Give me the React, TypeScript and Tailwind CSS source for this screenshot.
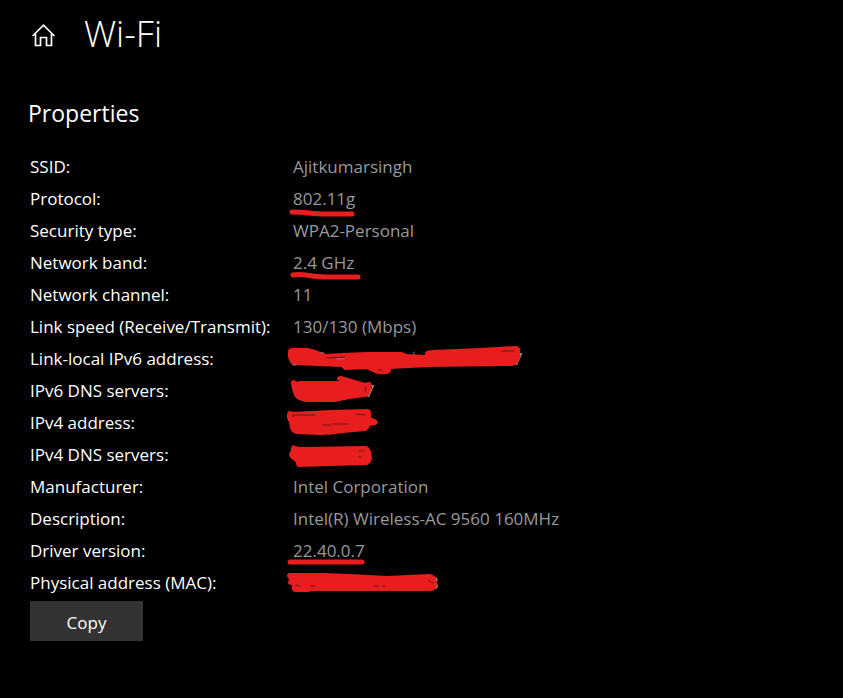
import type { ReactNode } from 'react';

type Property = {
  label: string;
  value?: string;
  // last visible character of a value that is scribbled over
  tail?: ReactNode;
  underline?: string;
  scribble?: string;
  gaps?: string;
  specks?: string;
};

const properties: Property[] = [
  { label: 'SSID:', value: 'Ajitkumarsingh' },
  { label: 'Protocol:', value: '802.11g', underline: 'M7 29C20 29 28 31 40 31H67' },
  { label: 'Security type:', value: 'WPA2-Personal' },
  { label: 'Network band:', value: '2.4 GHz', underline: 'M8 28C18 26 26 30 40 30H73' },
  { label: 'Network channel:', value: '11' },
  { label: 'Link speed (Receive/Transmit):', value: '130/130 (Mbps)' },
  {
    label: 'Link-local IPv6 address:',
    tail: <span className="ml-[220px]">7</span>,
    scribble:
      'M4 9Q4 6 8 6H22Q29 7 40 12L58 11L83 10H116L122 12L141 13V10Q142 8 147 8L195 6L230 4Q234 4 234 7V14L232 19Q230 22 226 22L142 23L105 25Q106 30 101 30Q94 31 88 28L82 25L60 26L57 23L8 21L6 19L4 14Z',
    gaps: 'M42 15L60 14M217 8H229M93 27L97 27',
    specks: 'M52 16H59M129 9V11M36 10H39M8 22H11',
  },
  {
    label: 'IPv6 DNS servers:',
    tail: <span className="ml-[72px]">7</span>,
    scribble:
      'M7 8Q7 6 9 6L11 8L15 7H55L58 6L53 4Q53 2 56 2L80 9L84 8Q86 8 86 11L84 17Q83 21 80 21L72 22Q62 23 50 26H21Q11 24 10 20L8 14Z',
    gaps: 'M81 12L80 17',
  },
  {
    label: 'IPv4 address:',
    scribble:
      'M3 8Q3 5 5 5L8 6L45 4L82 3Q85 3 85 6V11L91 14Q93 16 90 17L84 18Q83 22 80 23L58 25Q46 27 35 27L12 26Q7 25 6 21L5 15L3 11Z',
    gaps: 'M8 10V8H30M71 7L80 8M38 18H46M48 17H62',
  },
  {
    label: 'IPv4 DNS servers:',
    scribble:
      'M7 9Q8 6 10 8L15 9L81 8Q84 9 85 13L86 19Q85 25 80 25L45 26L14 27Q12 27 12 23L6 18Q4 15 7 12Z',
    gaps: 'M74 12H79M74 18H76',
  },
  { label: 'Manufacturer:', value: 'Intel Corporation' },
  { label: 'Description:', value: 'Intel(R) Wireless-AC 9560 160MHz' },
  { label: 'Driver version:', value: '22.40.0.7', underline: 'M5 27H77' },
  {
    label: 'Physical address (MAC):',
    tail: <span className="ml-[136px]">8</span>,
    scribble:
      'M3 9Q3 7 5 7H38Q70 8 102 10L143 8Q149 8 150 12L151 16Q151 23 145 23H27L23 24H11Q8 24 8 22V18L4 16L5 12Z',
    gaps: 'M11 18L15 19M25 19H30M89 19H94M97 19H100M144 14L148 16',
  },
];

function PenMarks({ underline, scribble, gaps, specks }: Property) {
  if (!underline && !scribble) return null;

  return (
    <svg
      className="absolute top-0 -left-2 h-8 w-60 overflow-visible"
      viewBox="0 0 240 32"
      fill="none"
      strokeLinecap="round"
      strokeLinejoin="round"
      aria-hidden="true"
    >
      {underline && <path d={underline} stroke="#e81e1e" strokeWidth="5" />}
      {scribble && <path d={scribble} fill="#e81e1e" stroke="#e81e1e" strokeWidth="2" />}
      {gaps && <path d={gaps} stroke="#6e1212" strokeWidth="1" />}
      {specks && <path d={specks} stroke="#8f8080" strokeWidth="1" />}
    </svg>
  );
}

function HomeIcon() {
  return (
    <svg className="size-6" viewBox="0 0 24 24" fill="none" stroke="currentColor" strokeWidth="1.7" aria-hidden="true">
      <path d="M.6 12 11.5 1.2 22.4 12" />
      <path d="M3.5 10v11.5h5v-8h6v8h5V10" />
    </svg>
  );
}

export default function App() {
  const handleCopy = () => {
    const text = properties.map((p) => `${p.label} ${p.value ?? ''}`).join('\n');
    navigator.clipboard?.writeText(text);
  };

  return (
    <main className="min-h-screen bg-black px-7 pt-2 pb-14 font-['Open_Sans','Noto_Sans',sans-serif] text-white">
      <header className="flex h-13 items-center gap-7">
        <button type="button" aria-label="Home" className="ml-1 pt-1">
          <HomeIcon />
        </button>
        <h1 className="text-4xl leading-[50px] font-light">Wi-Fi</h1>
      </header>

      <h2 className="mt-9 text-[23px] leading-[34px]">Properties</h2>

      <dl className="mt-[21px] ml-0.5 text-[17px] leading-8">
        {properties.map((property) => (
          <div key={property.label} className="grid grid-cols-[263px_1fr]">
            <dt className="whitespace-nowrap">{property.label}</dt>
            <dd className="relative h-8 whitespace-nowrap text-[#999999]">
              {property.value}
              {property.tail}
              <PenMarks {...property} />
            </dd>
          </div>
        ))}
      </dl>

      <button
        type="button"
        onClick={handleCopy}
        className="mt-0.5 ml-0.5 h-10 w-[113px] bg-[#333333] pt-1 text-[17px] hover:bg-[#444444]"
      >
        Copy
      </button>
    </main>
  );
}
